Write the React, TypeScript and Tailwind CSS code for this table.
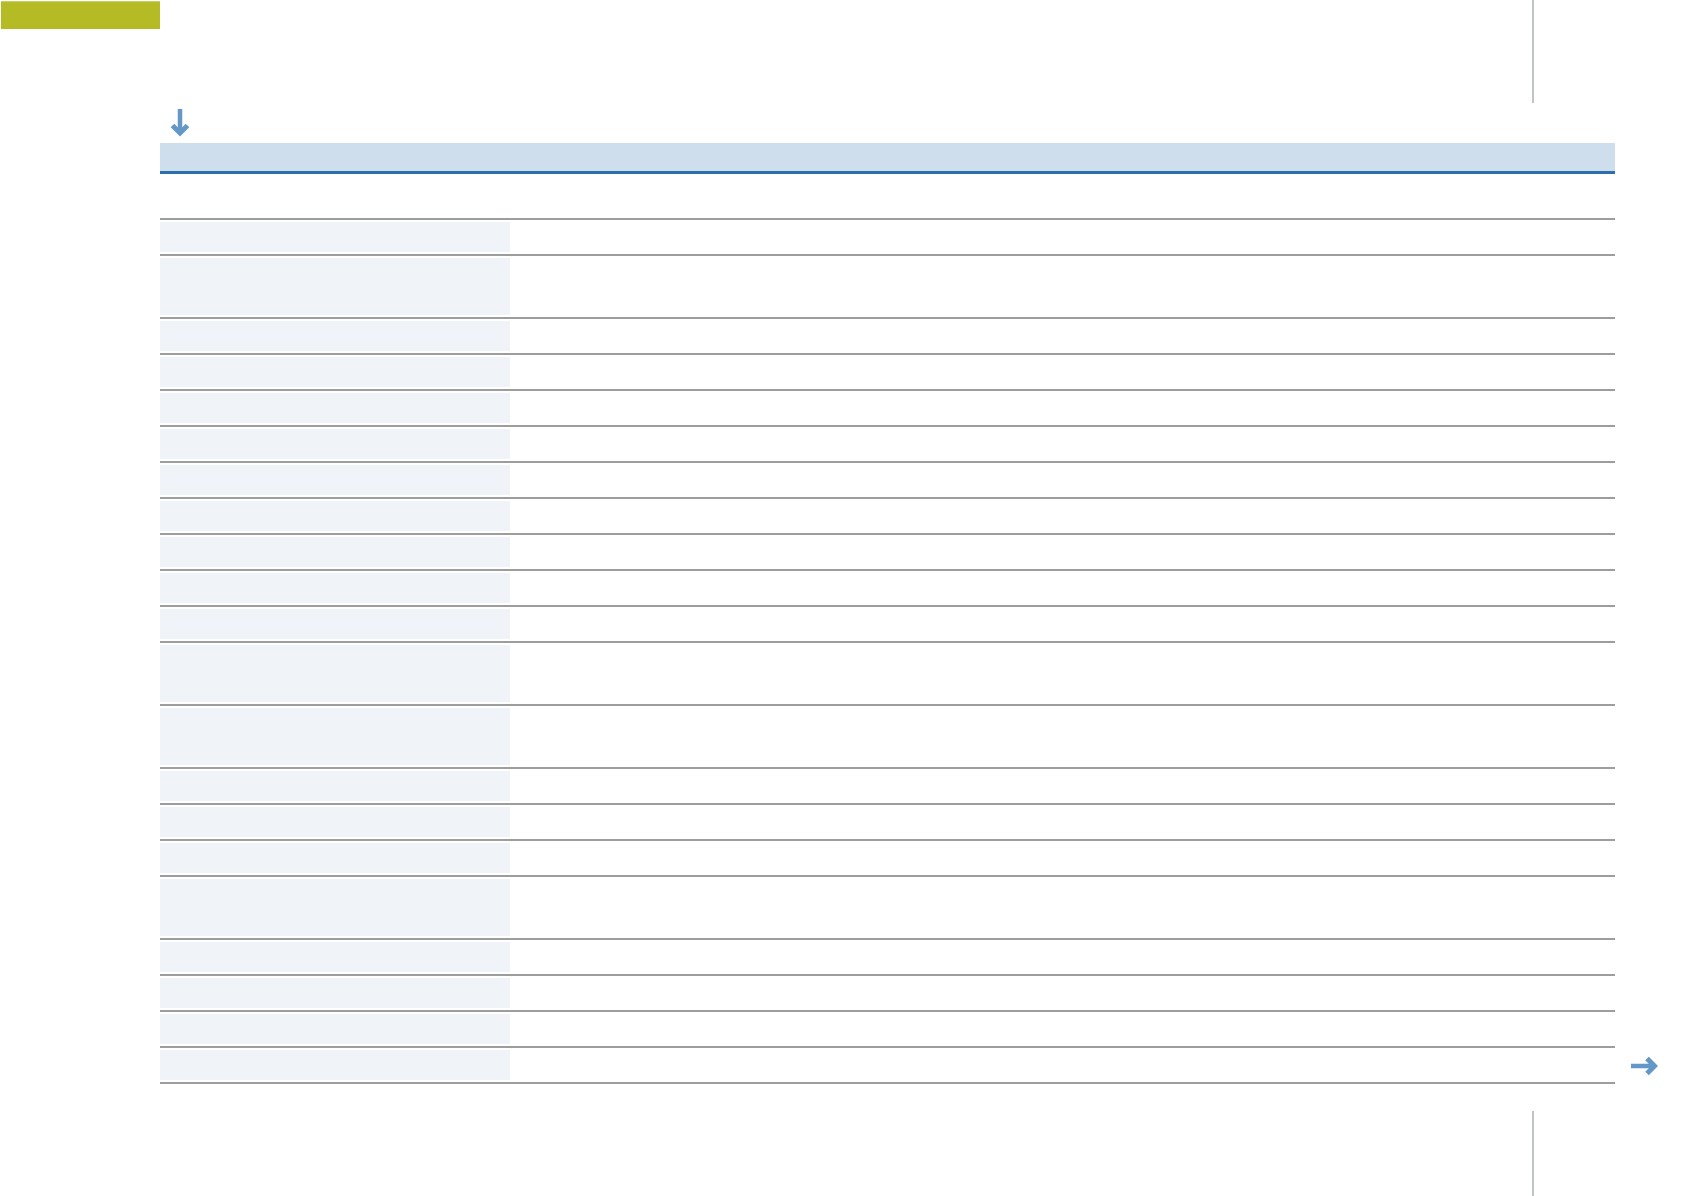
// page: empty data sheet with header band and striped rows
const rows: ("normal" | "tall")[] = [
  "normal",
  "tall",
  "normal",
  "normal",
  "normal",
  "normal",
  "normal",
  "normal",
  "normal",
  "normal",
  "normal",
  "tall",
  "tall",
  "normal",
  "normal",
  "normal",
  "tall",
  "normal",
  "normal",
  "normal",
  "normal",
];

const DownArrow = () => (
  <svg width="20" height="28" viewBox="0 0 20 28" fill="none">
    <path d="M10 0 V24" stroke="#6397c7" strokeWidth="4.5" />
    <path
      d="M2.5 16.5 L10 24 L17.5 16.5"
      stroke="#6397c7"
      strokeWidth="5"
      strokeLinejoin="miter"
    />
  </svg>
);

const RightArrow = () => (
  <svg width="27" height="20" viewBox="0 0 27 20" fill="none">
    <path d="M0 10 H23" stroke="#6397c7" strokeWidth="4.5" />
    <path
      d="M16 2.5 L23.5 10 L16 17.5"
      stroke="#6397c7"
      strokeWidth="5"
      strokeLinejoin="miter"
    />
  </svg>
);

const Row = ({ kind }: { kind: "normal" | "tall" }) => {
  return (
    <div
      className={`flex border-t-2 border-[#9d9d9d] py-[2px] ${
        kind === "tall" ? "h-[63px]" : "h-[36px]"
      }`}
    >
      <div className="w-[350px] bg-[#f0f3f8]"></div>
      <div className="flex-1"></div>
    </div>
  );
};

export default function App() {
  return (
    <div className="w-[1692px] h-[1196px] bg-white flex flex-col font-['Liberation_Sans',sans-serif]">
      {/* top strip */}
      <div className="flex h-[103px] shrink-0">
        <div className="ml-[1px] mt-[1px] w-[159px] h-[28px] bg-[#b4bb25] border-t border-[#c9cd6a]"></div>
        <div className="flex-1"></div>
        <div className="w-[2px] h-full bg-[#c0c3c8] mr-[158px]"></div>
      </div>

      <div className="mt-[6px] pl-[170px] h-[28px] shrink-0">
        <DownArrow />
      </div>

      {/* table header */}
      <div className="ml-[160px] mt-[6px] w-[1455px] h-[31px] shrink-0 bg-[#cfdeed] border-b-[3px] border-[#2b6fb0]"></div>

      <div className="flex mt-[44px] shrink-0">
        <div className="ml-[160px] w-[1455px] border-b-2 border-[#9d9d9d]">
          {rows.map((kind, i) => (
            <Row key={i} kind={kind} />
          ))}
        </div>
        <div className="self-end ml-[16px] mb-[8px]">
          <RightArrow />
        </div>
      </div>

      <div className="flex-1 flex pt-[27px]">
        <div className="ml-[1532px] w-[2px] bg-[#c0c3c8]"></div>
      </div>
    </div>
  );
}
